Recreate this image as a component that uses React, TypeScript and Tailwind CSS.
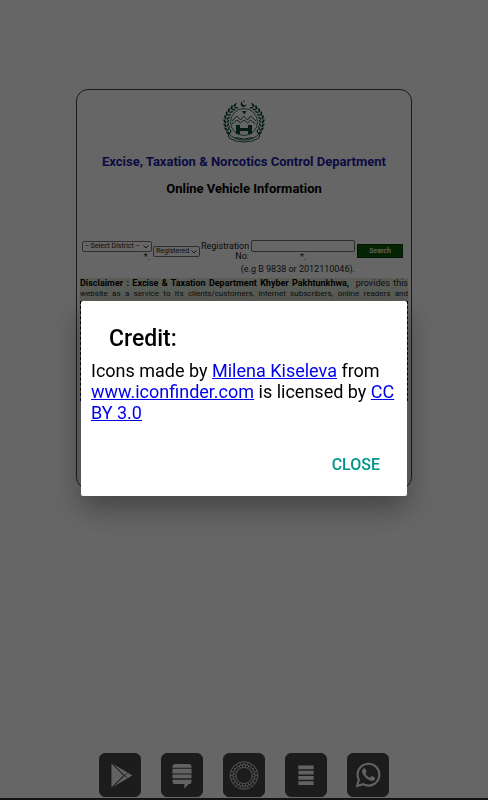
import React from 'react';

const LEAVES = [0, 1, 2, 3, 4, 5, 6, 7, 8];
const SPOKES = Array.from({ length: 20 }, (_, i) => i * 18);

const Emblem = () => (
    <svg viewBox="0 0 42 44" className="mx-auto block h-11 w-[42px]" fill="none" stroke="#0f4a38" aria-label="Khyber Pakhtunkhwa emblem">
        <path d="M19.500 2.500a2.900 2.900 0 1 0 4 2.600 2.300 2.300 0 1 1-4-2.600Z" fill="#0f4a38" stroke="none" />
        <circle cx="21" cy="2.200" r=".7" fill="#0f4a38" stroke="none" />
        <circle cx="21" cy="23" r="13.500" strokeWidth="0.8" />
        <path d="M9 22l5-5 3.500 4 3-4 4 4 3-4 5.500 5M9 25l5-4 3.500 3 3.500-3 3.500 3 3-3 5 4" strokeWidth="0.9" />
        <path d="M19 12h4.500l-2 3.500ZM13 26h4v3h8v-3h4v9h-4v-3h-8v3h-4Z" fill="#0f4a38" stroke="none" />
        <path d="M5 34q6 7 16 7t16-7l-1 5q-6 4-15 4t-15-4ZM12 38.500q9 3 18 0" strokeWidth="0.9" />
        {LEAVES.map((n) => (
            <g key={n} fill="#0f4a38" stroke="none">
                <ellipse cx="1.800" cy="23" rx="1" ry="2.300" transform={`rotate(${-34 + n * 12} 21 23) rotate(-30 1.800 23)`} />
                <ellipse cx="4.800" cy="23" rx=".8" ry="1.900" transform={`rotate(${-34 + n * 12} 21 23) rotate(35 4.800 23)`} />
                <ellipse cx="40.200" cy="23" rx="1" ry="2.300" transform={`rotate(${34 - n * 12} 21 23) rotate(30 40.200 23)`} />
                <ellipse cx="37.200" cy="23" rx=".8" ry="1.900" transform={`rotate(${34 - n * 12} 21 23) rotate(-35 37.200 23)`} />
            </g>
        ))}
    </svg>
);

const PlayIcon = () => (
    <svg viewBox="0 0 42 43" className="size-full">
        <path d="M12 9v26l22-13Z" fill="#f5f5f5" />
        <path d="M12 9l17 16M12 35l17-16M12 9l13 13-13 13" fill="none" stroke="#484848" strokeWidth="0.9" />
    </svg>
);

const ChatIcon = () => (
    <svg viewBox="0 0 42 43" className="size-full" fill="#f5f5f5">
        <path d="M14 10h14q3 0 3 3v1H11v-1q0-3 3-3ZM11 15h20v5H11ZM11 21h20v4H11ZM11 26.500h20v1.500q0 3-3 3l-4.500 5v-5H14q-3 0-3-3Z" />
    </svg>
);

const RingIcon = () => (
    <svg viewBox="0 0 42 43" className="size-full" fill="none" stroke="#d4d4d4" strokeWidth="0.9">
        <circle cx="21" cy="22" r="14.500" />
        <circle cx="21" cy="22" r="11.500" />
        <circle cx="21" cy="22" r="8.500" />
        {SPOKES.map((deg) => (
            <g key={deg}>
                <path d="M21 7.500v3" transform={`rotate(${deg} 21 22)`} />
                <path d="M21 10.500v3" transform={`rotate(${deg + 9} 21 22)`} />
            </g>
        ))}
    </svg>
);

const MenuIcon = () => (
    <svg viewBox="0 0 42 43" className="size-full" fill="#f5f5f5">
        <path d="M13 11.500h16v4H13ZM13 17h16v4H13ZM13 22.500h16v4H13ZM13 28h16v4H13Z" />
    </svg>
);

const WhatsAppIcon = () => (
    <svg viewBox="0 0 42 43" className="size-full">
        <path d="M9.500 33l1.900-6.500a11.400 11.400 0 1 1 4.500 4.600Z" fill="none" stroke="#f5f5f5" strokeWidth="2.200" />
        <path d="M17 14.500c-2 .5-3 3-1.500 5.800 2 3.800 5 6.300 8.500 7.200 2.500.5 4.500-1 4.500-3.200l-3.600-1.900-1.900 1.900c-2-.6-4-2.600-4.700-4.400l1.300-1.700-1.500-3.600Z" fill="#f5f5f5" />
    </svg>
);

const shortcuts = [
    { label: 'Play Store', Icon: PlayIcon },
    { label: 'Feedback', Icon: ChatIcon },
    { label: 'Vehicle', Icon: RingIcon },
    { label: 'Menu', Icon: MenuIcon },
    { label: 'WhatsApp', Icon: WhatsAppIcon },
];

const Chevron = () => (
    <svg viewBox="0 0 8 8" className="pointer-events-none absolute top-0 right-0.5 h-full w-2" fill="none" stroke="#333">
        <path d="M1.500 3l2.500 2.500L6.500 3" />
    </svg>
);

const SearchForm = () => (
    <form className="mt-[41px] text-[9px] leading-[10px] text-[#222]" onSubmit={(e) => e.preventDefault()}>
        <div className="flex items-start pl-0.5">
            <div className="mt-px w-[70px] text-right">
                <div className="relative">
                    <select aria-label="District" className="block h-[11px] w-full appearance-none rounded-xs border border-[#777] pl-0.5 text-[7px] leading-[9px]">
                        <option>-- Select District --</option>
                    </select>
                    <Chevron />
                </div>
                <span className="pr-0.5">*.</span>
            </div>
            <div className="relative mt-1.5 ml-px w-[47px]">
                <select aria-label="Status" className="block h-[11px] w-full appearance-none rounded-xs border border-[#777] pl-0.5 text-[7px] leading-[9px]">
                    <option>Registered</option>
                </select>
                <Chevron />
            </div>
            <label htmlFor="regno" className="mt-px ml-px w-12 text-right">Registration No:</label>
            <div className="ml-0.5 min-w-0 flex-1 text-center">
                <input id="regno" type="text" className="block h-3 w-full rounded-xs border border-[#777]" />
                <span>*.</span>
            </div>
            <button type="submit" className="mt-1 mr-[5px] ml-0.5 h-[14px] w-[46px] border border-[#053505] bg-[#0a5a0a] text-[7px] leading-3 font-medium text-white">Search</button>
        </div>
        <p className="mt-0.5 pr-[53px] text-right">(e.g B 9838 or 2012110046).</p>
    </form>
);

const CreditDialog = () => (
    <div className="fixed inset-0 flex items-center bg-black/60 px-[81px] pb-[3px]">
        <div role="dialog" aria-labelledby="credit-title" className="w-full rounded-xs bg-white shadow-[0_12px_30px_rgba(0,0,0,0.35)]">
            <h2 id="credit-title" className="px-7 pt-6 text-[23px] leading-7 font-medium">Credit:</h2>
            <p className="px-[10px] pt-[7px] text-[18px] leading-[21px]">
                Icons made by <a href="#author" className="text-[#0000ee] underline">Milena Kiseleva</a> from{' '}
                <a href="#iconfinder" className="text-[#0000ee] underline">www.iconfinder.com</a> is licensed by{' '}
                <a href="#license" className="text-[#0000ee] underline">CC BY 3.0</a>
            </p>
            <div className="flex justify-end px-5 pt-6 pb-[13px]">
                <button type="button" className="h-9 px-[7px] text-[16px] font-medium text-[#009688]">CLOSE</button>
            </div>
        </div>
    </div>
);

const App = () => {
    return (
        <div className="flex min-h-screen flex-col bg-white font-['Roboto',sans-serif] text-black">
            <main className="px-[76px] pt-[89px]">
                <section className="min-h-[400px] rounded-xl border border-[#444] px-[3px] pt-[9px]">
                    <Emblem />
                    <h1 className="mt-[9px] text-center text-[13px] leading-5 font-bold text-[#1c1ca8]">Excise, Taxation &amp; Norcotics Control Department</h1>
                    <h2 className="mt-[7px] text-center text-[13px] leading-5 font-bold">Online Vehicle Information</h2>
                    <SearchForm />
                    <div className="mt-1 bg-[#dfe8d8] text-[9px] leading-[10px]">
                        <p className="text-justify text-[#222] [text-align-last:justify]">
                            <b className="text-black">Disclaimer : Excise &amp; Taxation Department Khyber Pakhtunkhwa,</b>
                            &nbsp; provides this
                            <br />
                            <span className="text-[8px]">website as a service to its clients/customers, internet subscribers, online readers and</span>
                        </p>
                        <div className="mt-0.5 h-[100px] border-x border-t border-dashed border-black" />
                    </div>
                </section>
            </main>
            <nav className="mt-auto flex justify-center gap-5 border-b-2 border-[#333] pb-px">
                {shortcuts.map(({ label, Icon }) => (
                    <button key={label} type="button" aria-label={label} className="h-11 w-[42px] rounded-md border border-[#3b4c4c] bg-[#484848]">
                        <Icon />
                    </button>
                ))}
            </nav>
            <CreditDialog />
        </div>
    );
};

export default App;
